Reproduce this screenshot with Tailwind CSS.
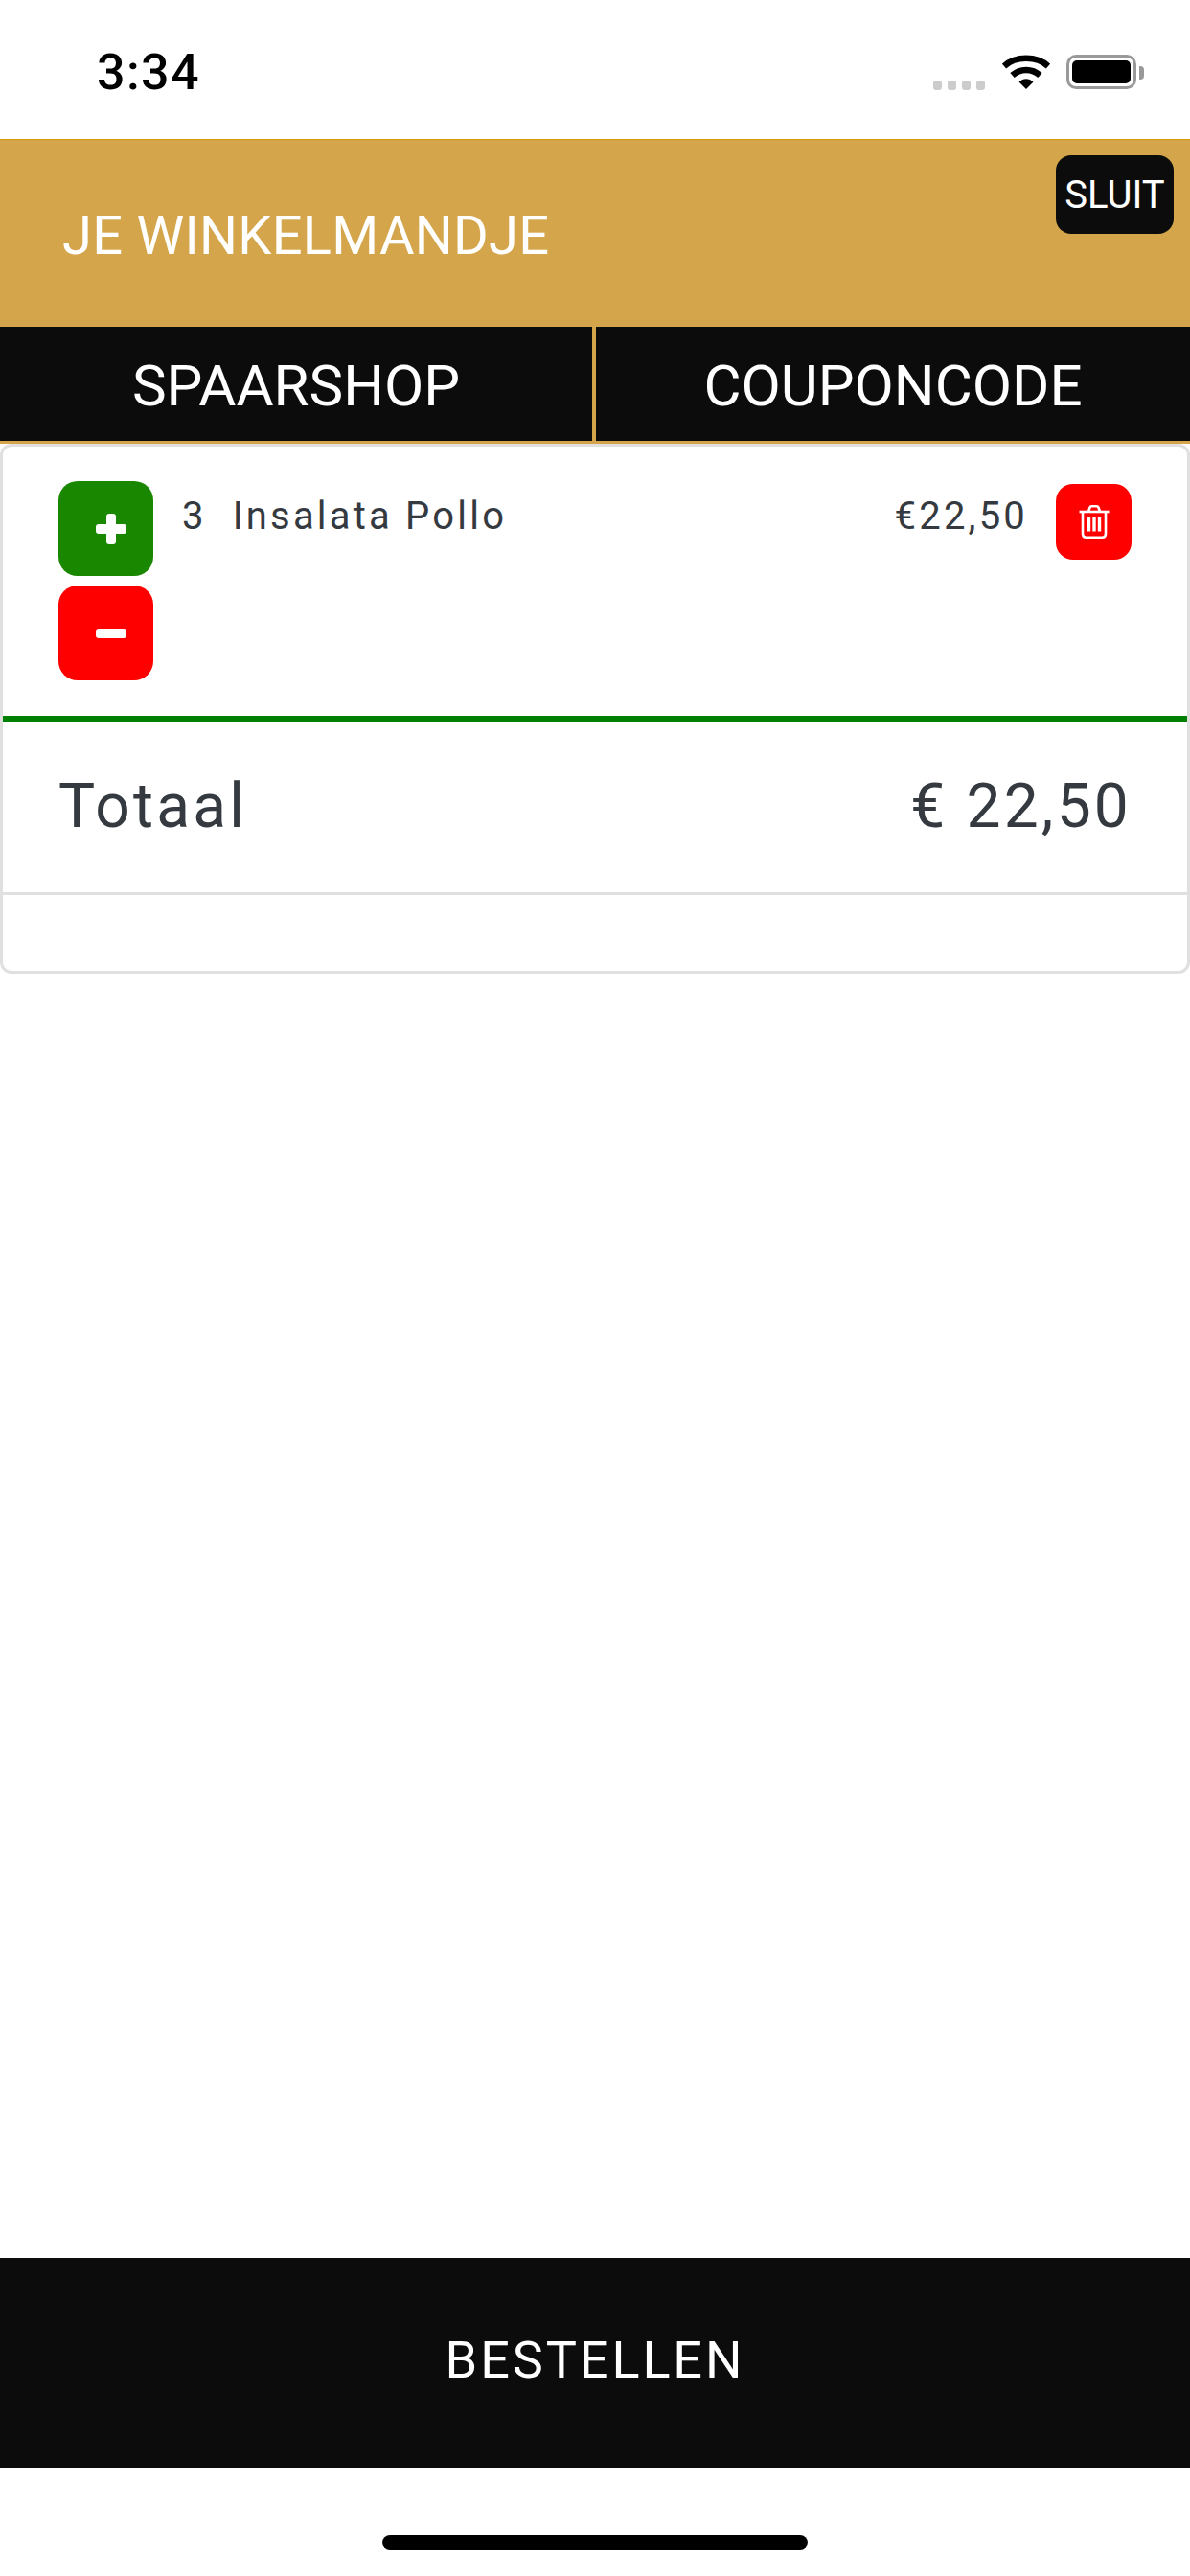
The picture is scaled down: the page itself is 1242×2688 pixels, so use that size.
<!DOCTYPE html>
<html lang="nl">

<head>
  <meta charset="utf-8" />
  <meta name="viewport" content="width=device-width, initial-scale=1" />
  <title>Je winkelmandje</title>
  <script src="https://cdn.jsdelivr.net/npm/@tailwindcss/browser@4"></script>
</head>

<body class="bg-white font-['Roboto',sans-serif]">
  <div class="flex flex-col w-[1242px] h-[2688px] overflow-hidden">
    <!-- Statusbalk -->
    <div class="relative h-[145px] shrink-0 flex items-start pl-[101px] pt-[47px]">
      <span class="text-[52px] leading-[58px] tracking-[1.4px] font-medium text-black">3:34</span>
      <div class="absolute left-[974px] top-[57px] flex items-end">
        <div class="flex gap-[6px] mb-[-1px] mr-[18px]">
          <div class="w-[9px] h-[10px] rounded-[3px] bg-[#cccccc]"></div>
          <div class="w-[9px] h-[10px] rounded-[3px] bg-[#cccccc]"></div>
          <div class="w-[9px] h-[10px] rounded-[3px] bg-[#cccccc]"></div>
          <div class="w-[9px] h-[10px] rounded-[3px] bg-[#cccccc]"></div>
        </div>
        <svg width="50" height="36" viewBox="0 0 50 36" class="mr-[17px]">
          <path d="M2 12 C14 1 36 1 48 12" fill="none" stroke="#000" stroke-width="6.5" />
          <path d="M10.5 21.5 C19 14 31 14 39.5 21.5" fill="none" stroke="#000" stroke-width="6.5" />
          <path d="M25 36 L17.5 28.5 C22 24 28 24 32.5 28.5 Z" fill="#000" />
        </svg>
        <div class="w-[73px] h-[36px] rounded-[10px] border-[3px] border-[#999999] p-[3px]">
          <div class="h-full rounded-[5px] bg-black"></div>
        </div>
        <div class="w-[5px] h-[14px] mb-[10px] ml-[3px] rounded-r-[4px] bg-[#999999]"></div>
      </div>
    </div>

    <!-- Kop -->
    <header class="relative h-[196px] shrink-0 flex items-center pl-[65px] pt-[4px] bg-[#d4a54a] border-t border-[#d49b00]">
      <h1 class="text-[56px] tracking-[0.3px] font-normal text-white">JE WINKELMANDJE</h1>
      <button class="absolute left-[1102px] top-[16px] w-[123px] h-[82px] flex items-center justify-center pt-[2px] rounded-[16px] bg-[#0c0c0c] text-white text-[40px]">SLUIT</button>
    </header>

    <!-- Tabs -->
    <div class="flex h-[122px] shrink-0 bg-[#d4a54a] pb-[3px] gap-[4px]">
      <div class="w-[618px] flex items-center justify-center pt-[4px] bg-[#0c0c0c] text-white text-[60px]">SPAARSHOP</div>
      <div class="flex-1 flex items-center justify-center pt-[4px] bg-[#0c0c0c] text-white text-[60px]">COUPONCODE</div>
    </div>

    <!-- Mandje -->
    <div class="h-[553px] shrink-0 flex flex-col border-[3px] border-[#e0e0e0] rounded-[12px] text-[#343a40]">
      <div class="h-[287px] shrink-0 flex items-start border-b-[6px] border-[#008000] pl-[58px] pr-[58px] pt-[36px]">
        <div class="flex flex-col gap-[10px] w-[99px] shrink-0">
          <button class="h-[99px] pl-[39px] flex items-center rounded-[20px] bg-[#1a8700]">
            <svg width="32" height="32" viewBox="0 0 32 32">
              <rect x="11" y="0" width="10" height="32" rx="3" fill="#fff" />
              <rect x="0" y="11" width="32" height="10" rx="3" fill="#fff" />
            </svg>
          </button>
          <button class="h-[99px] pl-[39px] flex items-center rounded-[20px] bg-[#ff0000]">
            <svg width="32" height="10" viewBox="0 0 32 10">
              <rect x="0" y="0" width="32" height="10" rx="3" fill="#fff" />
            </svg>
          </button>
        </div>
        <div class="flex-1 flex items-start justify-between pl-[30px] pr-[29px] pt-[9px] text-[40px] leading-[56px] tracking-[3.2px]">
          <span class="flex gap-[27px]"><span>3</span><span>Insalata Pollo</span></span>
          <span>€22,50</span>
        </div>
        <button class="w-[79px] h-[79px] mt-[3px] shrink-0 flex items-center justify-center rounded-[18px] bg-[#ff0000]">
          <svg width="32" height="35" viewBox="0 0 32 35" fill="none" stroke="#fff" stroke-width="2.6">
            <path d="M0.5 7 H31.5" />
            <path d="M10 7 L11.5 2.5 Q12 1.3 13.5 1.3 H18.5 Q20 1.3 20.5 2.5 L22 7" />
            <path d="M4 7 V30 Q4 33.7 7.5 33.7 H24.5 Q28 33.7 28 30 V7" />
            <path d="M10.5 12.5 V27.5 M16 12.5 V27.5 M21.5 12.5 V27.5" stroke-width="3.4" />
          </svg>
        </button>
      </div>
      <div class="h-[181px] shrink-0 flex items-center justify-between pl-[58px] pr-[58px] border-b-[3px] border-[#e0e0e0] text-[64px] tracking-[3.2px]">
        <span>Totaal</span>
        <span>€ 22,50</span>
      </div>
    </div>

    <div class="flex-1"></div>

    <!-- Bestellen -->
    <button class="h-[219px] shrink-0 flex items-center justify-center pb-[6px] bg-[#0c0c0c] text-white text-[54px] tracking-[2.9px]">BESTELLEN</button>

    <!-- Home-indicator -->
    <div class="h-[113px] shrink-0 flex justify-center pt-[70px]">
      <div class="w-[444px] h-[16px] rounded-full bg-black"></div>
    </div>
  </div>
</body>

</html>
